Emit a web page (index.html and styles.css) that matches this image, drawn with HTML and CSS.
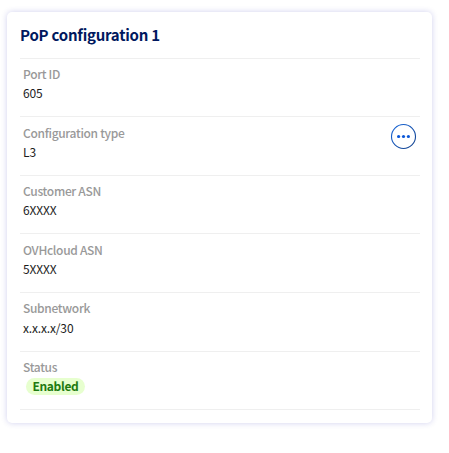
FILE: index.html
```html
<!DOCTYPE html>
<html lang="en">
<head>
<meta charset="utf-8">
<title>PoP configuration</title>
<link rel="stylesheet" href="styles.css">
</head>
<body>
<section class="card">
  <h1 class="card-title">PoP configuration 1</h1>
  <dl class="rows">
    <div class="row"><div><dt>Port ID</dt><dd>605</dd></div></div>
    <div class="row row-loose">
      <div><dt>Configuration type</dt><dd>L3</dd></div>
      <button class="menu" type="button" aria-label="Actions">
        <svg width="26" height="26" viewBox="0 0 26 26"><defs><linearGradient id="ring" x1="0" y1="0" x2="1" y2="1"><stop offset="0" stop-color="#1767dc"/><stop offset="1" stop-color="#123f88"/></linearGradient></defs><circle cx="13.5" cy="13.5" r="12" fill="none" stroke="url(#ring)" stroke-width="1.1"/><g fill="#0b57d8"><circle cx="8.6" cy="13.5" r="1.6"/><circle cx="13.5" cy="13.5" r="1.6"/><circle cx="18.4" cy="13.5" r="1.6"/></g></svg>
      </button>
    </div>
    <div class="row"><div><dt>Customer ASN</dt><dd>6XXXX</dd></div></div>
    <div class="row row-loose"><div><dt>OVHcloud ASN</dt><dd>5XXXX</dd></div></div>
    <div class="row row-tall"><div><dt>Subnetwork</dt><dd>x.x.x.x/30</dd></div></div>
    <div class="row"><div><dt>Status</dt><dd><span class="badge">Enabled</span></dd></div></div>
  </dl>
</section>
</body>
</html>
```
FILE: styles.css
```css
* { box-sizing: border-box; }
body {
  margin: 0;
  min-height: 453px;
  padding: 12px 16px 0 7px;
  background: #fff;
  font-family: "Noto Sans CJK SC", "Noto Sans", sans-serif;
  font-size: 12px;
  color: #1c1c1c;
}
.card {
  width: 425px;
  height: 411px;
  padding: 0 12px 0 13px;
  background: #fff;
  border-radius: 5px;
  box-shadow: 0 0 6px rgba(0, 0, 165, 0.19);
}
.card-title {
  margin: 0;
  height: 46px;
  line-height: 45px;
  font-size: 15px;
  font-weight: 700;
  letter-spacing: -0.23px;
  color: #00185e;
}
.rows { margin: 0; border-bottom: 1px solid #efefef; }
.row {
  display: flex;
  justify-content: space-between;
  height: 58px;
  padding: 5px 4px 0 3px;
  border-top: 1px solid #efefef;
}
.row-loose { height: 59px; padding-top: 6px; }
.row-tall { height: 59px; }
.row-tall dt { height: 20px; }
dt {
  height: 19px;
  line-height: 19px;
  font-weight: 500;
  letter-spacing: -0.32px;
  color: #999;
}
dd { margin: 0; height: 19px; line-height: 19px; letter-spacing: -0.12px; }
.menu {
  width: 26px;
  height: 26px;
  padding: 0;
  border: 0;
  background: none;
}
.menu svg { display: block; overflow: visible; }
.badge {
  display: block;
  width: 59px;
  height: 17px;
  margin: 2px 0 0 3px;
  padding-left: 6.5px;
  border-radius: 9px;
  background: #e7ffcf;
  color: #1e7a10;
  font-weight: 700;
  letter-spacing: -0.35px;
  line-height: 15px;
}
```
